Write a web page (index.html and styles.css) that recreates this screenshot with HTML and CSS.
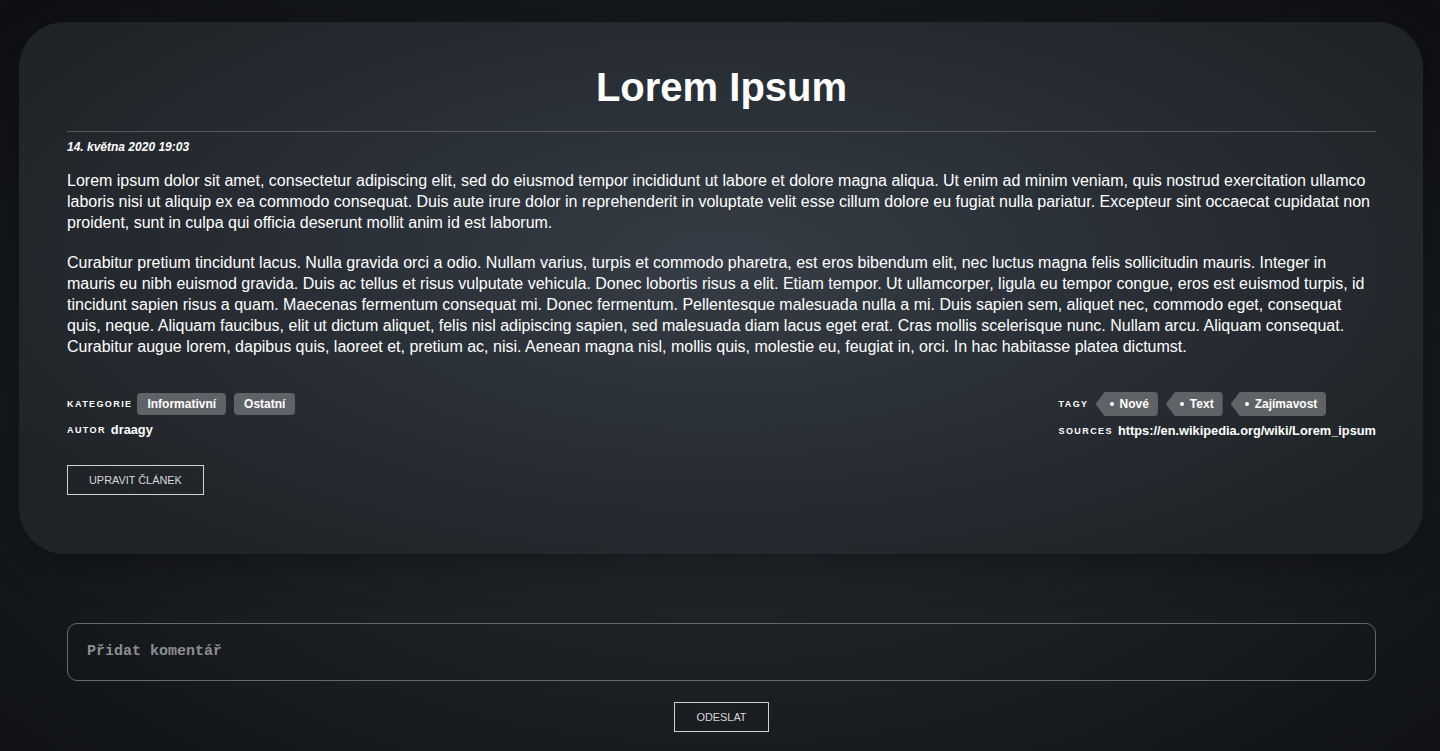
FILE: index.html
```html
<!DOCTYPE html>
<html lang="cs">
<head>
<meta charset="utf-8">
<title>Lorem Ipsum</title>
<link rel="stylesheet" href="styles.css">
</head>
<body>
<main class="page">
  <article class="card">
    <h1 class="title">Lorem Ipsum</h1>
    <hr class="rule">
    <div class="date">14. května 2020 19:03</div>
    <div class="content">
      <p>Lorem ipsum dolor sit amet, consectetur adipiscing elit, sed do eiusmod tempor incididunt ut labore et dolore magna aliqua. Ut enim ad minim veniam, quis nostrud exercitation ullamco laboris nisi ut aliquip ex ea commodo consequat. Duis aute irure dolor in reprehenderit in voluptate velit esse cillum dolore eu fugiat nulla pariatur. Excepteur sint occaecat cupidatat non proident, sunt in culpa qui officia deserunt mollit anim id est laborum.</p>
      <p>Curabitur pretium tincidunt lacus. Nulla gravida orci a odio. Nullam varius, turpis et commodo pharetra, est eros bibendum elit, nec luctus magna felis sollicitudin mauris. Integer in mauris eu nibh euismod gravida. Duis ac tellus et risus vulputate vehicula. Donec lobortis risus a elit. Etiam tempor. Ut ullamcorper, ligula eu tempor congue, eros est euismod turpis, id tincidunt sapien risus a quam. Maecenas fermentum consequat mi. Donec fermentum. Pellentesque malesuada nulla a mi. Duis sapien sem, aliquet nec, commodo eget, consequat quis, neque. Aliquam faucibus, elit ut dictum aliquet, felis nisl adipiscing sapien, sed malesuada diam lacus eget erat. Cras mollis scelerisque nunc. Nullam arcu. Aliquam consequat. Curabitur augue lorem, dapibus quis, laoreet et, pretium ac, nisi. Aenean magna nisl, mollis quis, molestie eu, feugiat in, orci. In hac habitasse platea dictumst.</p>
    </div>
    <div class="meta">
      <div class="meta-col">
        <div class="meta-row">
          <span class="label">Kategorie</span>
          <span class="badge">Informativní</span>
          <span class="badge">Ostatní</span>
        </div>
        <div class="meta-row">
          <span class="label">Autor</span>
          <span class="value">draagy</span>
        </div>
      </div>
      <div class="meta-col">
        <div class="meta-row">
          <span class="label">Tagy</span>
          <span class="tag">Nové</span>
          <span class="tag">Text</span>
          <span class="tag">Zajímavost</span>
        </div>
        <div class="meta-row">
          <span class="label">Sources</span>
          <span class="value">https://en.wikipedia.org/wiki/Lorem_ipsum</span>
        </div>
      </div>
    </div>
    <div class="actions">
      <button class="btn" type="button">Upravit článek</button>
    </div>
  </article>

  <form class="comment">
    <textarea class="comment-input" placeholder="Přidat komentář"></textarea>
    <button class="btn" type="button">Odeslat</button>
  </form>
</main>
</body>
</html>
```

FILE: styles.css
```css
* {
  box-sizing: border-box;
}

html, body {
  margin: 0;
  padding: 0;
  height: 100%;
}

body {
  font-family: "Liberation Sans", Arial, Helvetica, sans-serif;
  color: #ffffff;
  background: radial-gradient(ellipse 70% 75% at 50% 55%, #262b31 0%, #1a1d21 55%, #0e1013 100%);
  background-color: #0f1114;
  overflow: hidden;
}

.page {
  padding: 22px 17px 0 19px;
}

.card {
  border-radius: 46px;
  padding: 42px 47px 59px 48px;
  background: radial-gradient(ellipse 60% 70% at 50% 45%, #363d46 0%, #2a3037 45%, #1f2327 100%);
  box-shadow: 0 10px 40px rgba(0, 0, 0, 0.35);
}

.title {
  margin: 0;
  font-size: 40px;
  line-height: 46px;
  font-weight: 700;
  text-align: center;
}

.rule {
  margin: 21px 0 0;
  border: 0;
  height: 1px;
  background: #55595d;
}

.date {
  margin-top: 8px;
  font-size: 12px;
  line-height: 14px;
  font-style: italic;
  font-weight: 700;
}

.content {
  margin-top: 16px;
}

.content p {
  margin: 0 0 19px;
  font-size: 16px;
  line-height: 21px;
}

.content p:last-child {
  margin-bottom: 0;
}

.meta {
  margin-top: 35px;
  display: flex;
  justify-content: space-between;
  align-items: flex-start;
}

.meta-col {
  display: flex;
  flex-direction: column;
  gap: 3px;
}

.meta-row {
  display: flex;
  align-items: center;
  min-height: 23px;
}

.label {
  font-size: 9px;
  font-weight: 700;
  text-transform: uppercase;
  letter-spacing: 1.4px;
  margin-right: 5px;
}

.value {
  font-size: 12.8px;
  font-weight: 700;
}

.badge {
  background: #5f6367;
  border-radius: 4px;
  font-size: 12px;
  font-weight: 700;
  line-height: 22px;
  padding: 0 10px;
  margin-right: 8px;
}

.tag {
  position: relative;
  background: #5f6367;
  border-radius: 0 4px 4px 0;
  font-size: 12px;
  font-weight: 700;
  line-height: 24px;
  padding: 0 9px 0 24px;
  margin-left: 2px;
  margin-right: 6px;
  clip-path: polygon(0 50%, 9px 0, 100% 0, 100% 100%, 9px 100%);
}

.tag::before {
  content: "";
  position: absolute;
  left: 14px;
  top: 10px;
  width: 4px;
  height: 4px;
  border-radius: 50%;
  background: #ffffff;
}

.actions {
  margin-top: 23px;
}

.btn {
  height: 30px;
  padding: 0 21px;
  background: transparent;
  border: 1px solid #cfd0d1;
  color: #d6d7d8;
  font-family: "Liberation Sans", Arial, Helvetica, sans-serif;
  font-size: 10.9px;
  text-transform: uppercase;
  cursor: pointer;
}

.comment {
  margin: 69px 47px 0 48px;
  display: flex;
  flex-direction: column;
  align-items: center;
  gap: 21px;
}

.comment-input {
  width: 100%;
  height: 58px;
  resize: none;
  border: 1px solid #65696d;
  border-radius: 10px;
  background: transparent;
  padding: 18px 19px;
  color: #ffffff;
  font-family: "Liberation Mono", "Courier New", monospace;
  font-size: 15px;
  font-weight: 700;
  line-height: 20px;
}

.comment-input::placeholder {
  color: #8b8e91;
}
```
